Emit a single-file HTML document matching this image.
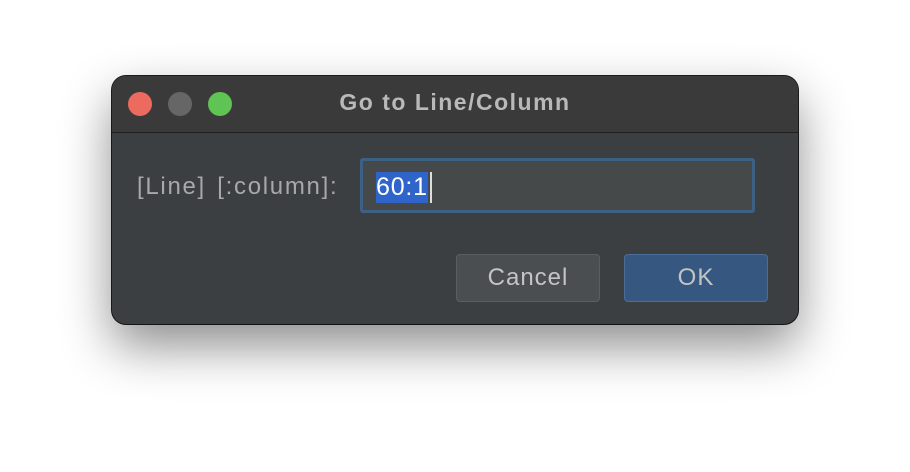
<!DOCTYPE html>
<html><head><style>
html,body{margin:0;width:910px;height:472px;background:#fff;overflow:hidden;font-family:"Liberation Sans",sans-serif}
.win{position:absolute;left:112px;top:76px;width:686px;height:248px;border-radius:14px;background:#3c3f41;box-shadow:0 22px 50px rgba(0,0,0,.45),0 0 0 1px #1e1e1e;overflow:hidden}
.tb{position:absolute;left:0;top:0;width:100%;height:56px;background:#3b3a3b;border-bottom:1px solid #1f1f1f}
.dot{position:absolute;top:16px;width:24px;height:24px;border-radius:50%}
.title{position:absolute;left:0;right:0;top:13px;text-align:center;color:#b9b9b9;font-weight:bold;font-size:23px;letter-spacing:1.5px}
.lbl{position:absolute;left:25px;top:97px;color:#a8a8a8;font-size:24px;letter-spacing:1.7px;word-spacing:3px}
.inp{position:absolute;left:248px;top:82px;width:389px;height:49px;border:3px solid #3d6185;border-radius:3px;background:#45494a}
.sel{position:absolute;left:13px;top:11px;height:31px;background:#2f65ca;color:#fff;font-size:25px;line-height:31px;letter-spacing:0.8px;padding-right:0}
.btn{position:absolute;top:178px;width:142px;height:46px;border-radius:4px;font-size:24px;letter-spacing:1px;text-align:center;line-height:46px;color:#c4c4c4}
</style></head><body>
<div class="win">
<div class="tb">
<div class="dot" style="left:16px;background:#ec6a5e"></div>
<div class="dot" style="left:56px;background:#666"></div>
<div class="dot" style="left:96px;background:#5fc454"></div>
<div class="title">Go to Line/Column</div>
</div>
<div class="lbl">[Line] [:column]:</div>
<div class="inp"><div class="sel">60:1</div><div style="position:absolute;left:67px;top:11px;width:2px;height:31px;background:#ddd"></div></div>
<div class="btn" style="left:344px;background:#4b4e50;border:1px solid #5b5e60">Cancel</div>
<div class="btn" style="left:512px;background:#365880;border:1px solid #4a6e98">OK</div>
</div>
</body></html>
